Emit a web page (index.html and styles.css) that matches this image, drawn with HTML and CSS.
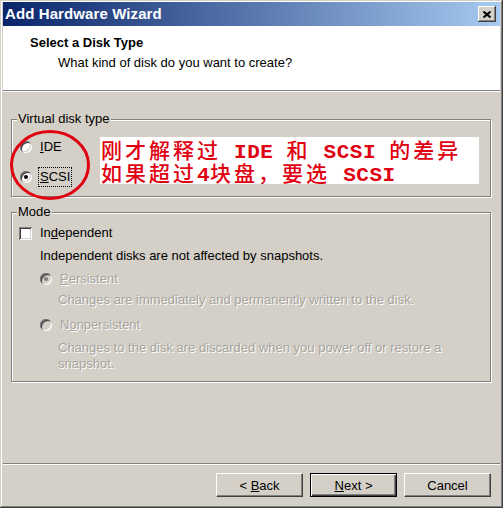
FILE: index.html
```html
<!DOCTYPE html>
<html lang="en">
<head>
    <meta charset="UTF-8">
    <meta name="viewport" content="width=device-width, initial-scale=1.0">
    <title>Add Hardware Wizard</title>
    <link rel="stylesheet" href="styles.css">
</head>
<body>
    <div class="window">
        <div class="titlebar">
            <span class="title">Add Hardware Wizard</span>
            <span class="close-btn">
                <svg width="8" height="7" viewBox="0 0 8 7">
                    <path d="M0.5 0.5 L7.5 6.5 M7.5 0.5 L0.5 6.5" stroke="#000" stroke-width="2"/>
                </svg>
            </span>
        </div>

        <div class="header">
            <div class="header-title">Select a Disk Type</div>
            <div class="header-sub">What kind of disk do you want to create?</div>
        </div>

        <div class="content">
            <div class="group group-type">
                <span class="group-label">Virtual disk type</span>
                <div class="type-options">
                    <div class="option">
                        <span class="radio"></span>
                        <span class="opt-label"><u>I</u>DE</span>
                    </div>
                    <div class="option">
                        <span class="radio checked"></span>
                        <span class="opt-label focused"><u>S</u>CSI</span>
                    </div>
                </div>
                <div class="note">
                    <div class="note-line">刚才解释过<span class="lat"> IDE </span>和<span class="lat"> SCSI </span>的差异</div>
                    <div class="note-line">如果超过<span class="lat">4</span>块盘，要选<span class="lat"> SCSI</span></div>
                </div>
                <svg class="mark" width="82" height="72" viewBox="0 0 82 72">
                    <ellipse cx="41" cy="36" rx="38.5" ry="33.5" fill="none" stroke="#e00010" stroke-width="3"/>
                </svg>
            </div>

            <div class="group group-mode">
                <span class="group-label">Mode</span>
                <div class="check-row">
                    <span class="checkbox"></span>
                    <span class="check-label">In<u>d</u>ependent</span>
                </div>
                <div class="desc">Independent disks are not affected by snapshots.</div>
                <div class="mode-row row-persistent">
                    <span class="radio disabled checked"></span>
                    <span class="mode-label"><u>P</u>ersistent</span>
                </div>
                <div class="mode-desc desc-persistent">Changes are immediately and permanently written to the disk.</div>
                <div class="mode-row row-nonpersistent">
                    <span class="radio disabled"></span>
                    <span class="mode-label">N<u>o</u>npersistent</span>
                </div>
                <div class="mode-desc desc-nonpersistent">Changes to the disk are discarded when you power off or restore a<br>snapshot.</div>
            </div>
        </div>

        <div class="footer">
            <button class="btn">&lt; <u>B</u>ack</button>
            <button class="btn default"><u>N</u>ext &gt;</button>
            <button class="btn">Cancel</button>
        </div>
    </div>
</body>
</html>
```

FILE: styles.css
```css
body {
    margin: 0;
    background-color: #d4d0c8;
    font-family: "Liberation Sans", Arial, sans-serif;
    font-size: 13px;
    line-height: 16px;
    color: #000;
}
.window {
    width: 503px;
    height: 508px;
    box-sizing: border-box;
    padding: 2px 3px 3px 3px;
    display: flex;
    flex-direction: column;
    background-color: #d4d0c8;
    box-shadow: inset -1px -1px #404040, inset 1px 1px #d4d0c8,
                inset -2px -2px #808080, inset 2px 2px #fff;
}

/* title bar */
.titlebar {
    height: 24px;
    display: flex;
    align-items: center;
    justify-content: space-between;
    background: linear-gradient(to right, #0a246a, #a6caf0);
    padding: 0 4px 0 2px;
}
.title {
    color: #fff;
    font-weight: bold;
    font-size: 15px;
    letter-spacing: 0.1px;
}
.close-btn {
    width: 18px;
    height: 16px;
    display: flex;
    align-items: center;
    justify-content: center;
    background-color: #d4d0c8;
    box-shadow: inset -1px -1px #404040, inset 1px 1px #fff, inset -2px -2px #808080;
}

/* white header */
.header {
    height: 65px;
    box-sizing: border-box;
    background-color: #fff;
    border-bottom: 1px solid #808080;
    box-shadow: 0 1px #fff;
    padding: 9px 0 0 27px;
}
.header-title {
    font-weight: bold;
}
.header-sub {
    margin-top: 4px;
    padding-left: 28px;
}

/* content */
.content {
    flex: 1;
    padding: 28px 9px 0 8px;
}
.group {
    position: relative;
    border: 1px solid #808080;
    box-shadow: inset 1px 1px #fff, 1px 1px #fff;
}
.group-label {
    position: absolute;
    top: -9px;
    left: 5px;
    padding: 0 1px;
    background-color: #d4d0c8;
}
.group-type {
    display: flex;
    align-items: flex-start;
    padding: 17px 0 9px 8px;
}
.type-options {
    width: 80px;
    display: flex;
    flex-direction: column;
    gap: 10px;
}
.option {
    height: 20px;
    display: flex;
    align-items: center;
}
.opt-label {
    margin-left: 6px;
    padding: 1px 1px;
    border: 1px solid transparent;
}
.opt-label.focused {
    border: 1px dotted #000;
}
.note {
    width: 379px;
    height: 47px;
    box-sizing: border-box;
    padding: 1px 0 0 1px;
    background-color: #fff;
    color: #e00010;
    font-family: "Noto Sans CJK SC", sans-serif;
    font-weight: 500;
    font-size: 21px;
    letter-spacing: 3px;
    white-space: nowrap;
}
.note-line {
    height: 23px;
    line-height: 23px;
}
.note .lat {
    font-family: "Liberation Mono", monospace;
    font-size: 21px;
    font-weight: bold;
    letter-spacing: 0.5px;
}
.mark {
    position: absolute;
    left: -3px;
    top: 9px;
}

/* radios and checkbox */
.radio {
    position: relative;
    width: 12px;
    height: 12px;
    border-radius: 50%;
    background-color: #fff;
    box-shadow: inset 1px 1px #808080, inset -1px -1px #fff,
                inset 2px 2px #404040, inset -2px -2px #d4d0c8;
    flex-shrink: 0;
}
.radio.checked::after {
    content: "";
    position: absolute;
    left: 4px;
    top: 4px;
    width: 4px;
    height: 4px;
    border-radius: 50%;
    background-color: #000;
}
.radio.disabled {
    background-color: #d4d0c8;
}
.radio.disabled.checked::after {
    background-color: #808080;
}
.checkbox {
    width: 13px;
    height: 13px;
    background-color: #fff;
    box-shadow: inset 1px 1px #808080, inset -1px -1px #fff,
                inset 2px 2px #404040, inset -2px -2px #d4d0c8;
}

/* mode group */
.group-mode {
    margin-top: 15px;
    padding: 12px 0 9px 7px;
}
.check-row {
    height: 16px;
    display: flex;
    align-items: center;
}
.check-label {
    margin-left: 8px;
}
.desc {
    margin: 7px 0 0 21px;
}
.mode-row {
    height: 16px;
    display: flex;
    align-items: center;
    margin-left: 21px;
}
.row-persistent {
    margin-top: 7px;
}
.row-nonpersistent {
    margin-top: 9px;
}
.mode-label,
.mode-desc {
    color: #a7a49d;
    text-shadow: 1px 1px 0 #fff;
}
.mode-label {
    margin-left: 8px;
}
.mode-desc {
    margin-left: 39px;
}
.desc-persistent {
    margin-top: 5px;
}
.desc-nonpersistent {
    margin-top: 7px;
}

/* buttons */
.footer {
    display: flex;
    justify-content: flex-end;
    gap: 7px;
    border-top: 1px solid #808080;
    box-shadow: inset 0 1px #fff;
    padding: 9px 9px 8px 0;
}
.btn {
    width: 87px;
    height: 24px;
    padding: 0;
    font-family: "Liberation Sans", Arial, sans-serif;
    font-size: 13px;
    color: #000;
    background-color: #d4d0c8;
    border: 1px solid;
    border-color: #fff #404040 #404040 #fff;
    box-shadow: inset -1px -1px #808080;
}
.btn.default {
    border: 1px solid #000;
    box-shadow: inset 1px 1px #fff, inset -1px -1px #404040, inset -2px -2px #808080;
}
```
